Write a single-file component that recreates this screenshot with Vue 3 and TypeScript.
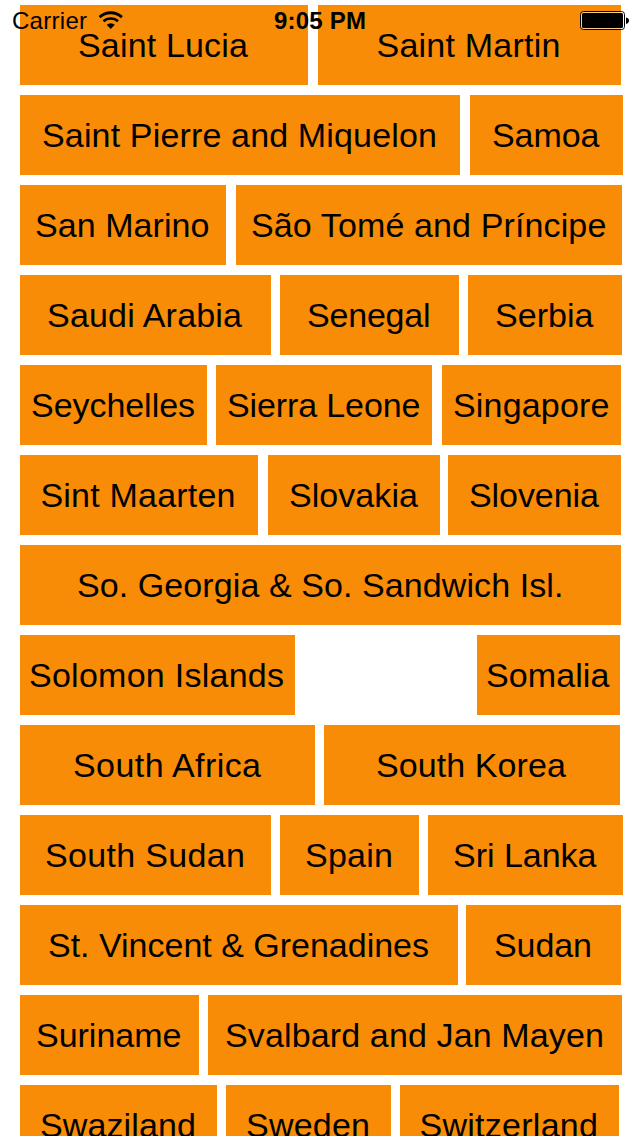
<script setup lang="ts">
interface Tile {
  name: string
  gap: number
  width: number
  inset: number
  span: number
}

const family = '"Liberation Sans", Arial, sans-serif'
const pen = document.createElement('canvas').getContext('2d')!

// Tracks a label so that its drawn letters start at `inset` and cover `span` pixels.
function fit(text: string, inset: number, span: number, font = '34px') {
  pen.font = `${font} ${family}`
  const m = pen.measureText(text)
  const ink = m.actualBoundingBoxLeft + m.actualBoundingBoxRight
  return {
    paddingLeft: `${(inset + m.actualBoundingBoxLeft).toFixed(2)}px`,
    letterSpacing: `${((span - ink) / (text.length - 1)).toFixed(3)}px`,
  }
}

const t = (name: string, gap: number, width: number, inset: number, span: number): Tile => ({
  name, gap, width, inset, span,
})

const rows: Tile[][] = [
  [t('Saint Lucia', 0, 288, 59, 169), t('Saint Martin', 10, 303, 59.5, 181)],
  [t('Saint Pierre and Miquelon', 0, 440, 23, 392), t('Samoa', 10, 153, 23, 106.5)],
  [t('San Marino', 0, 206, 16, 172.5), t('São Tomé and Príncipe', 10, 386, 16, 354)],
  [t('Saudi Arabia', 0, 251, 28, 196), t('Senegal', 9, 179, 28, 121), t('Serbia', 9, 154, 28, 97.5)],
  [t('Seychelles', 0, 187, 12, 162), t('Sierra Leone', 9, 216, 12, 191.5), t('Singapore', 10, 179, 12, 154.5)],
  [t('Sint Maarten', 0, 238, 21.5, 192), t('Slovakia', 10, 172, 22, 128), t('Slovenia', 8, 173, 22, 129)],
  [t('So. Georgia & So. Sandwich Isl.', 0, 601, 58, 483)],
  [t('Solomon Islands', 0, 275, 10, 253), t('Somalia', 182, 143, 10, 122.5)],
  [t('South Africa', 0, 295, 54, 189), t('South Korea', 9, 296, 53, 189)],
  [t('South Sudan', 0, 251, 26, 197), t('Spain', 9, 139, 26, 85), t('Sri Lanka', 9, 195, 26, 142.5)],
  [t('St. Vincent & Grenadines', 0, 438, 29, 379), t('Sudan', 8, 155, 29, 95)],
  [t('Suriname', 0, 179, 17, 143.5), t('Svalbard and Jan Mayen', 9, 414, 18, 376)],
  [t('Swaziland', 0, 197, 21, 153), t('Sweden', 9, 165, 21, 121), t('Switzerland', 9, 219, 20.5, 175.5)],
]
</script>

<template>
  <main class="screen">
    <div class="list">
      <div v-for="(row, r) in rows" :key="r" class="row">
        <div
          v-for="tile in row"
          :key="tile.name"
          class="tile"
          :style="{ marginLeft: `${tile.gap}px`, width: `${tile.width}px`, ...fit(tile.name, tile.inset, tile.span) }"
        >{{ tile.name }}</div>
      </div>
    </div>
    <header class="status">
      <div class="left">
        <span class="carrier" :style="fit('Carrier', 13, 74, '24px')">Carrier</span>
        <svg class="wifi" width="26" height="19" viewBox="0 0 26 19">
          <path d="M1.6 6.1A16.5 16.5 0 0 1 23.9 6.1" fill="none" stroke="#000" stroke-width="2.8" />
          <path d="M5.5 10.3A10.8 10.8 0 0 1 20 10.3" fill="none" stroke="#000" stroke-width="2.7" />
          <path d="M8.7 13.8A6 6 0 0 1 16.8 13.8L12.75 18Z" />
        </svg>
      </div>
      <span class="time" :style="fit('9:05 PM', 0, 91, 'bold 24px')">9:05 PM</span>
      <svg class="battery" width="50" height="20" viewBox="0 0 50 20">
        <rect x=".5" y=".5" width="44" height="18" rx="3" fill="none" stroke="#000" />
        <rect x="1.5" y="1.5" width="42" height="16" rx="2" fill="none" stroke="#fff" stroke-opacity=".55" />
        <rect x="2" y="2" width="41" height="15" rx="1.5" />
        <path d="M46 6.5Q49 7 49 9.5T46 13Z" />
      </svg>
    </header>
  </main>
</template>

<style>
body {
  margin: 0;
  background: #fff;
}
</style>

<style scoped>
.screen {
  position: relative;
  width: 640px;
  height: 1136px;
  overflow: hidden;
  color: #000;
  background: #fff;
  font-family: "Liberation Sans", Arial, sans-serif;
}
.list {
  display: flex;
  flex-direction: column;
  gap: 10px;
  padding: 5px 0 0 20px;
}
.row {
  display: flex;
  height: 80px;
}
.tile {
  box-sizing: border-box;
  flex: none;
  height: 80px;
  background: #f88c06;
  font-size: 34px;
  line-height: 80px;
  white-space: nowrap;
}
.status {
  position: absolute;
  inset: 0 0 auto;
  display: grid;
  grid-template-columns: 274px 306px 60px;
  height: 40px;
  font-size: 24px;
  line-height: 41px;
  white-space: nowrap;
}
.left {
  display: flex;
}
.carrier {
  box-sizing: border-box;
  width: 98px;
}
.wifi {
  margin-top: 11px;
}
.time {
  font-weight: bold;
}
.battery {
  margin-top: 11px;
}
</style>
